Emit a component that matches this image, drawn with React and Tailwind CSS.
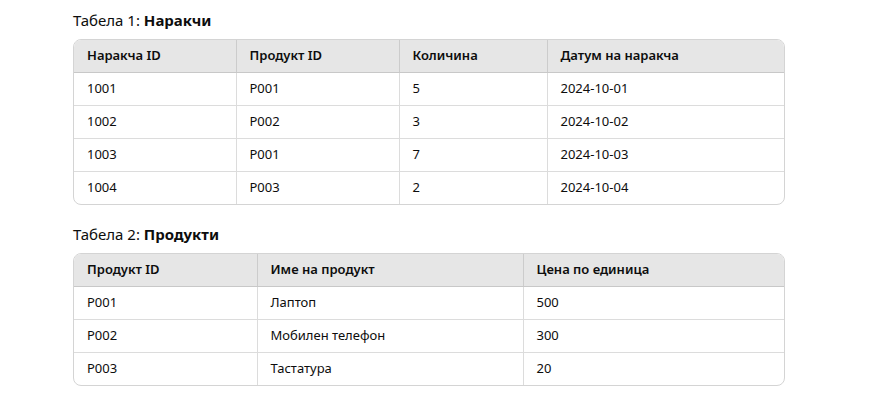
const orders = [
  ["1001", "P001", "5", "2024-10-01"],
  ["1002", "P002", "3", "2024-10-02"],
  ["1003", "P001", "7", "2024-10-03"],
  ["1004", "P003", "2", "2024-10-04"],
];

const products = [
  ["P001", "Лаптоп", "500"],
  ["P002", "Мобилен телефон", "300"],
  ["P003", "Тастатура", "20"],
];

function Table({ head, rows, widths }) {
  return (
    <div className="w-[712px] rounded-lg border border-[#d4d4d4] overflow-hidden">
      <table className="w-full border-collapse text-[13px] text-[#0d0d0d] table-fixed">
        <colgroup>
          {widths.map((w, i) => (
            <col key={i} style={{ width: w }} />
          ))}
        </colgroup>
        <thead>
          <tr className="bg-[#e6e6e6] h-[32px]">
            {head.map((h, i) => (
              <th
                key={i}
                className="text-left font-semibold px-[13px] border-b border-[#c8c8c8] border-l first:border-l-0 border-l-[#cccccc]"
              >
                {h}
              </th>
            ))}
          </tr>
        </thead>
        <tbody>
          {rows.map((r, ri) => (
            <tr key={ri} className="h-[33px]">
              {r.map((c, ci) => (
                <td
                  key={ci}
                  className={
                    "px-[13px] border-l first:border-l-0 border-[#dcdcdc] " +
                    (ri < rows.length - 1 ? "border-b" : "")
                  }
                >
                  {c}
                </td>
              ))}
            </tr>
          ))}
        </tbody>
      </table>
    </div>
  );
}

export default function App() {
  return (
    <div className="min-h-screen bg-white pl-[73px] pt-[9px] font-['Noto_Sans',sans-serif] text-[#0d0d0d]">
      <h3 className="text-[15px] h-[22px] leading-[22px] mb-[8px]">
        Табела 1: <strong className="font-bold">Наракчи</strong>
      </h3>
      <Table
        head={["Наракча ID", "Продукт ID", "Количина", "Датум на наракча"]}
        rows={orders}
        widths={["162px", "163px", "148px", "239px"]}
      />
      <h3 className="text-[15px] h-[22px] leading-[22px] mt-[18px] mb-[8px]">
        Табела 2: <strong className="font-bold">Продукти</strong>
      </h3>
      <Table
        head={["Продукт ID", "Име на продукт", "Цена по единица"]}
        rows={products}
        widths={["183px", "266px", "263px"]}
      />
    </div>
  );
}
